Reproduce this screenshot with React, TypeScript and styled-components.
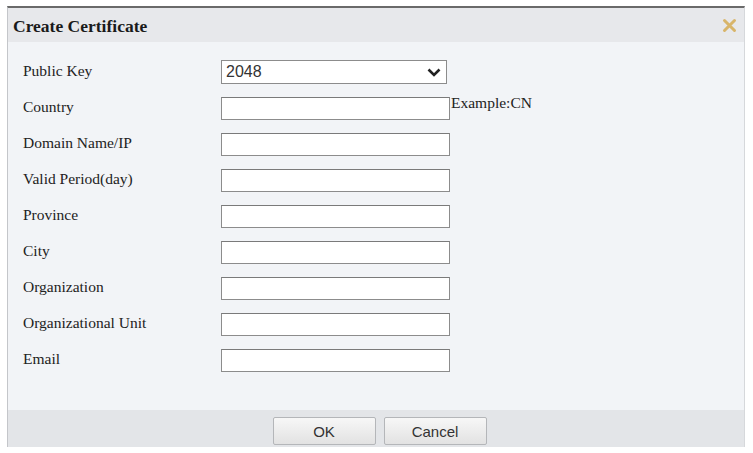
import React from "react";
import styled, { createGlobalStyle } from "styled-components";

const GlobalStyle = createGlobalStyle`
  html, body {
    margin: 0;
    padding: 0;
    background: #ffffff;
  }
  body {
    font-family: "Liberation Serif", "Times New Roman", serif;
  }
`;

const Page = styled.div`
  width: 753px;
  height: 453px;
  padding: 6px 0 0 7px;
  box-sizing: border-box;
`;

const Dialog = styled.div`
  width: 738px;
  display: flex;
  flex-direction: column;
  border-top: 2px solid #6a6a6a;
  border-left: 1px solid #c4c6ca;
  border-right: 1px solid #d6d8db;
  box-sizing: border-box;
`;

const Header = styled.div`
  height: 34px;
  background: #e7e8eb;
  display: flex;
  align-items: center;
  justify-content: space-between;
  padding: 0 6px 0 5px;
`;

const Title = styled.h2`
  margin: 0;
  font-family: "Liberation Serif", "Times New Roman", serif;
  font-size: 17.5px;
  font-weight: 700;
  color: #1a1a1a;
  padding-top: 2px;
`;

const CloseButton = styled.button`
  width: 18px;
  height: 18px;
  padding: 0;
  border: none;
  background: transparent;
  display: flex;
  align-items: center;
  justify-content: center;
  cursor: pointer;
`;

const Body = styled.div`
  background: #f2f4f7;
  padding: 12px 0 32px 15px;
  display: flex;
  flex-direction: column;
`;

const Row = styled.div`
  height: 36px;
  display: grid;
  grid-template-columns: 198px auto auto;
  justify-content: start;
  align-items: center;
`;

const Label = styled.label`
  font-family: "Liberation Serif", "Times New Roman", serif;
  font-size: 15.5px;
  color: #222;
  margin-top: -2px;
`;

const TextInput = styled.input`
  width: 229px;
  height: 23px;
  box-sizing: border-box;
  border: 1px solid #8c8c8c;
  border-top-color: #7a7a7a;
  background: #ffffff;
  margin: 0;
  padding: 0 4px;
  font-size: 13px;
`;

const SelectBox = styled.div`
  width: 226px;
  height: 24px;
  box-sizing: border-box;
  border: 1px solid #8c8c8c;
  background: #ffffff;
  display: flex;
  align-items: center;
  justify-content: space-between;
  padding: 0 5px 0 4px;
  font-family: "Liberation Sans", Arial, sans-serif;
  font-size: 16px;
  color: #333;
`;

const Hint = styled.span`
  font-family: "Liberation Serif", "Times New Roman", serif;
  font-size: 15.5px;
  color: #222;
  margin-left: 1px;
  align-self: start;
  padding-top: 4px;
`;

const Footer = styled.div`
  height: 37px;
  background: #e3e5e8;
  display: flex;
  justify-content: center;
  align-items: flex-start;
  gap: 8px;
  padding-top: 7px;
  box-sizing: border-box;
  padding-left: 7px;
`;

const Button = styled.button`
  width: 103px;
  height: 28px;
  border: 1px solid #b4b6b9;
  border-radius: 2px;
  background: linear-gradient(#f7f7f7, #e2e2e2);
  font-family: "Liberation Sans", Arial, sans-serif;
  font-size: 15px;
  color: #333;
  padding: 0;
  cursor: pointer;
`;

const fields: { label: string; hint?: string }[] = [
  { label: "Country", hint: "Example:CN" },
  { label: "Domain Name/IP" },
  { label: "Valid Period(day)" },
  { label: "Province" },
  { label: "City" },
  { label: "Organization" },
  { label: "Organizational Unit" },
  { label: "Email" },
];

export default function App() {
  return (
    <>
      <GlobalStyle />
      <Page>
        <Dialog>
          <Header>
            <Title>Create Certificate</Title>
            <CloseButton aria-label="Close">
              <svg width="15" height="15" viewBox="0 0 15 15">
                <path
                  d="M2.5 2.5 L12.5 12.5 M12.5 2.5 L2.5 12.5"
                  stroke="#d8b56a"
                  strokeWidth="3"
                  strokeLinecap="round"
                />
              </svg>
            </CloseButton>
          </Header>
          <Body>
            <Row>
              <Label>Public Key</Label>
              <SelectBox>
                <span>2048</span>
                <svg width="14" height="9" viewBox="0 0 14 9">
                  <path
                    d="M1.5 1.5 L7 7 L12.5 1.5"
                    fill="none"
                    stroke="#222"
                    strokeWidth="2.6"
                  />
                </svg>
              </SelectBox>
            </Row>
            {fields.map((f) => (
              <Row key={f.label}>
                <Label>{f.label}</Label>
                <TextInput type="text" />
                {f.hint && <Hint>{f.hint}</Hint>}
              </Row>
            ))}
          </Body>
          <Footer>
            <Button>OK</Button>
            <Button>Cancel</Button>
          </Footer>
        </Dialog>
      </Page>
    </>
  );
}
